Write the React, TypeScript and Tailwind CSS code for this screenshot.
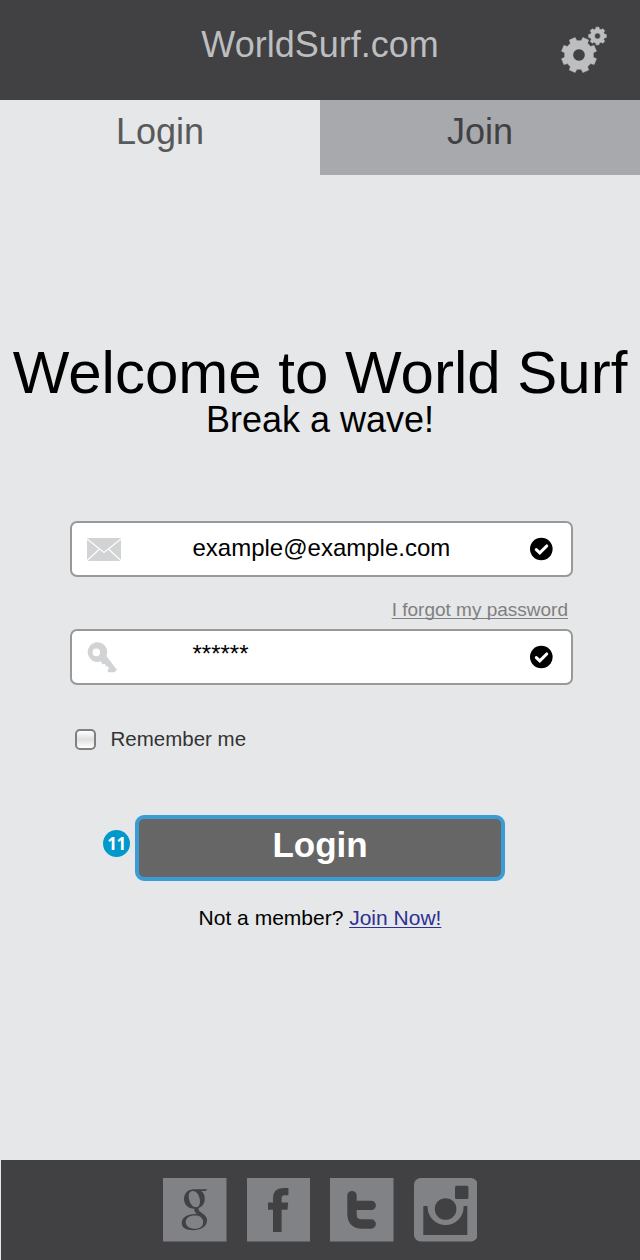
import React from 'react';

function gearPath(cx: number, cy: number, outer: number, inner: number, hole: number, offset: number) {
  const teeth = 8;
  const pts: string[] = [];
  for (let i = 0; i < teeth; i++) {
    const a = offset + i * 45;
    const corners: [number, number][] = [
      [-14, inner],
      [-10, outer],
      [10, outer],
      [14, inner],
    ];
    for (const [d, r] of corners) {
      const t = ((a + d) * Math.PI) / 180;
      pts.push(`${(cx + r * Math.sin(t)).toFixed(2)} ${(cy - r * Math.cos(t)).toFixed(2)}`);
    }
  }
  return `M${pts.join('L')}ZM${cx - hole} ${cy}a${hole} ${hole} 0 1 0 ${hole * 2} 0a${hole} ${hole} 0 1 0 ${-hole * 2} 0Z`;
}

function Gears() {
  return (
    <svg width="50" height="50" viewBox="0 0 50 50" fill="#bcbec0" stroke="#bcbec0" strokeWidth="0.5" strokeLinejoin="round">
      <path fillRule="evenodd" d={gearPath(19, 30, 17.9, 14.5, 6.1, 22.5)} />
      <path fillRule="evenodd" d={gearPath(37.5, 11, 9, 7.2, 2.9, 0)} />
    </svg>
  );
}

function Mail() {
  return (
    <svg width="34" height="23" viewBox="0 0 34 23">
      <rect width="34" height="23" rx="0.5" fill="#d1d3d4" />
      <path d="M0 1L17 14.5L34 1M0 22.5L12 11.5M34 22.5L22 11.5" fill="none" stroke="#fff" strokeWidth="1.2" />
    </svg>
  );
}

function Key() {
  return (
    <svg width="31" height="31" viewBox="0 0 31 31" fill="#d1d3d4">
      <path
        fillRule="evenodd"
        d="M9.8 0.3A9.8 9.8 0 0 1 19.4 14L30 28L27.3 30.3L21 30.3L20.6 28.5L21.8 27L21.2 24.6L19 24.2L18.2 22L15.4 22.3L13.8 19.3A9.8 9.8 0 1 1 9.8 0.3ZM9.3 6.6A3.8 3.8 0 1 0 9.3 14.2A3.8 3.8 0 1 0 9.3 6.6Z"
      />
    </svg>
  );
}

function Check() {
  return (
    <svg width="24" height="24" viewBox="0 0 24 24">
      <circle cx="12.3" cy="12" r="11.3" fill="#000" />
      <path d="M7.3 12.6L10.8 15.8L17.7 9" fill="none" stroke="#fff" strokeWidth="3.1" strokeLinecap="round" />
    </svg>
  );
}

function Google() {
  return (
    <svg width="63.5" height="63.5" viewBox="0 0 63.5 63.5">
      <rect width="63.5" height="63.5" fill="#808285" />
      <g fill="#414042">
        <path fillRule="evenodd" d="M30 11.3C24 12 21 16 21 21C21 27 25.5 30.7 31.3 30.7C38 30.7 41.8 26.5 41.8 21C41.8 17 40.5 14.5 38 13L43 12.9L44.2 11.2ZM29.5 13C33.5 12.2 37 18 37 23.5C37 27 35.5 29.3 33 29.3C28.5 29.3 25.7 23 25.7 18C25.7 15 27 13.4 29.5 13Z" />
        <path d="M31.5 29.5H35.8C34.8 32 35.8 32.8 38.5 34.7C42 37 44 39 44 42.5L39.5 41.5C38.5 38.5 35.5 37.5 33.3 35.5C31.2 33.5 31 32 31.5 29.5Z" />
        <path fillRule="evenodd" d="M35.5 36.3C26 35 18.7 39 18.7 45C18.7 49.8 23.5 52.2 30 52.2C38 52.2 44 48.5 44 42.5C44 39 40 36.8 35.5 36.3ZM35.5 37.8C39 38.8 40.2 41 40.2 44C40.2 48.5 37 50.8 32 50.8C26.5 50.8 22.7 48.2 22.7 44C22.7 39 28 36.5 35.5 37.8Z" />
      </g>
    </svg>
  );
}

function Facebook() {
  return (
    <svg width="63.5" height="63.5" viewBox="0 0 63.5 63.5">
      <rect width="63.5" height="63.5" fill="#808285" />
      <path fill="#414042" d="M26 54V31.7H21V24.5H26V20.5Q26 10 36 10H41.4V17.2H37.3Q34.6 17.2 34.6 20.5V24.5H41.2L40.5 31.7H34.6V54Z" />
    </svg>
  );
}

function Twitter() {
  return (
    <svg width="63.5" height="63.5" viewBox="0 0 63.5 63.5">
      <rect width="63.5" height="63.5" fill="#808285" />
      <path d="M22 17.6V36Q22 46 32 46H41.2M22 27.4H41.2" fill="none" stroke="#414042" strokeWidth="9.4" strokeLinecap="round" />
    </svg>
  );
}

function Instagram() {
  return (
    <svg width="63.5" height="63.5" viewBox="0 0 63.5 63.5">
      <rect width="63.5" height="63.5" rx="6.5" fill="#808285" />
      <rect x="9.3" y="28" width="44" height="29" fill="#414042" />
      <circle cx="31.6" cy="29" r="18" fill="#808285" />
      <circle cx="31.6" cy="31" r="10.8" fill="#414042" />
      <rect x="41" y="7.7" width="13.4" height="13.4" rx="1.5" fill="#414042" />
    </svg>
  );
}

function Field({ icon, children }: { icon: React.ReactNode; children: React.ReactNode }) {
  return (
    <div className="flex h-[56px] w-[503px] items-center rounded-[7px] border-2 border-[#999999] bg-white pl-[15px] pr-[18px] text-black">
      <div className="w-[105.5px]">{icon}</div>
      <div className="flex-1 text-[24px] leading-[48px]">{children}</div>
      <Check />
    </div>
  );
}

export default function App() {
  return (
    <div className="flex h-[1260px] w-[640px] flex-col overflow-hidden bg-[#e6e7e8] font-['Liberation_Sans',Arial,sans-serif]">
      <header className="grid h-[100px] grid-cols-[1fr_auto_1fr] bg-[#414042]">
        <span />
        <h1 className="text-[36px] leading-[89px] text-[#bcbec0]">WorldSurf.com</h1>
        <div className="flex justify-end pr-[30px] pt-[25px]">
          <Gears />
        </div>
      </header>
      <nav className="grid h-[75px] grid-cols-2 text-center text-[36px] leading-[63px]">
        <div className="text-[#58595b]">Login</div>
        <div className="bg-[#a7a9ac] text-[#414042]">Join</div>
      </nav>
      <main className="flex flex-1 flex-col">
        <div className="pt-[168px] text-center text-black">
          <h2 className="whitespace-nowrap text-[60px] leading-[60px]">Welcome to World Surf</h2>
          <p className="-mt-[1px] text-[36px] leading-[36px]">Break a wave!</p>
        </div>
        <div className="ml-[70px] mt-[83px] flex w-[503px] flex-col">
          <Field icon={<Mail />}>
            <span className="block pb-[3px]">example@example.com</span>
          </Field>
          <a className="mt-[21px] h-[31px] pr-[5px] text-right text-[19px] leading-[24px] text-[#808080] underline decoration-1 underline-offset-2 [text-decoration-skip-ink:none]">I forgot my password</a>
          <Field icon={<Key />}>
            <span className="block pb-[7px]">******</span>
          </Field>
          <label className="mt-[43px] flex h-[22px] items-center pl-[5px] text-[20.5px] leading-[22px] text-[#333333]">
            <span className="mr-[14.5px] h-[21px] w-[21px] rounded-[5px] border-2 border-[#808080] bg-gradient-to-b from-white via-[#e0e0e0] to-white" />
            Remember me
          </label>
        </div>
        <div className="mt-[65px] flex h-[66px] items-start pl-[103px]">
          <span className="mr-[5px] mt-[15px] flex h-[27px] w-[27px] items-center justify-center rounded-full bg-[#0099cc] font-['Open_Sans',sans-serif] text-[17px] font-bold leading-[27px] tracking-[-0.5px] text-white">11</span>
          <button className="h-[66px] w-[370px] rounded-[9px] border-4 border-[#3a9bd5] bg-[#666666] pb-[6px] text-[35px] font-bold leading-[52px] text-white">Login</button>
        </div>
        <p className="mt-[23px] text-center text-[21px] leading-[28px] text-black">
          Not a member? <a className="text-[#2e3192] underline decoration-1 underline-offset-2 [text-decoration-skip-ink:none]">Join Now!</a>
        </p>
      </main>
      <footer className="ml-[1px] flex h-[100px] gap-[20px] bg-[#414042] pl-[162px] pt-[18px]">
        <Google />
        <Facebook />
        <Twitter />
        <Instagram />
      </footer>
    </div>
  );
}
